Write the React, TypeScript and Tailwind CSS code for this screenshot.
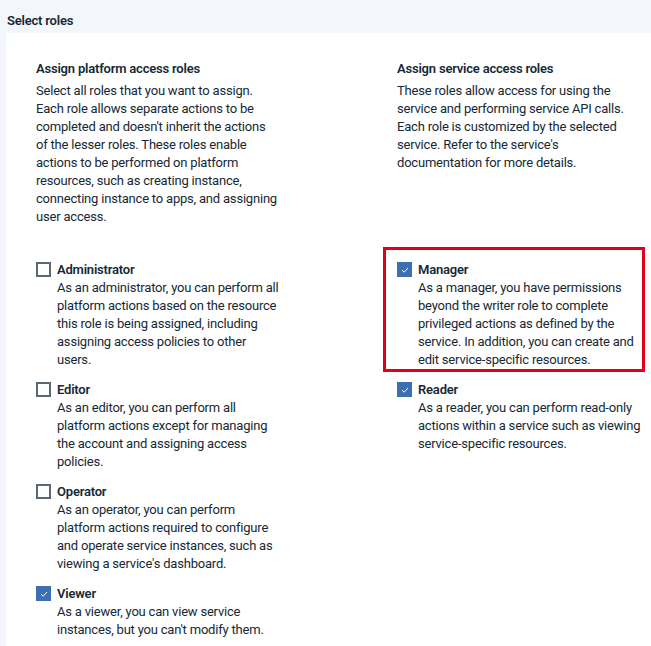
import React from 'react';

type Role = {
  name: string;
  checked: boolean;
  lines: string[];
  highlight?: boolean;
};

const platformRoles: Role[] = [
  {
    name: 'Administrator',
    checked: false,
    lines: [
      'As an administrator, you can perform all',
      'platform actions based on the resource',
      'this role is being assigned, including',
      'assigning access policies to other',
      'users.',
    ],
  },
  {
    name: 'Editor',
    checked: false,
    lines: [
      'As an editor, you can perform all',
      'platform actions except for managing',
      'the account and assigning access',
      'policies.',
    ],
  },
  {
    name: 'Operator',
    checked: false,
    lines: [
      'As an operator, you can perform',
      'platform actions required to configure',
      'and operate service instances, such as',
      "viewing a service's dashboard.",
    ],
  },
  {
    name: 'Viewer',
    checked: true,
    lines: ['As a viewer, you can view service', "instances, but you can't modify them."],
  },
];

const serviceRoles: Role[] = [
  {
    name: 'Manager',
    checked: true,
    highlight: true,
    lines: [
      'As a manager, you have permissions',
      'beyond the writer role to complete',
      'privileged actions as defined by the',
      'service. In addition, you can create and',
      'edit service-specific resources.',
    ],
  },
  {
    name: 'Reader',
    checked: true,
    lines: [
      'As a reader, you can perform read-only',
      'actions within a service such as viewing',
      'service-specific resources.',
    ],
  },
];

const Lines = ({ lines }: { lines: string[] }) => (
  <div>
    {lines.map((l, i) => (
      <div key={i} className="whitespace-nowrap">
        {l}
      </div>
    ))}
  </div>
);

const Checkbox = ({ checked }: { checked: boolean }) =>
  checked ? (
    <span className="mt-[1px] flex h-[15px] w-[15px] shrink-0 items-center justify-center bg-[#3d70b2]">
      <svg width="10" height="8" viewBox="0 0 10 8" fill="none">
        <path d="M2 4.2 L4.2 6.2 L8 2" stroke="white" strokeWidth="1" />
      </svg>
    </span>
  ) : (
    <span className="mt-[1px] block h-[15px] w-[15px] shrink-0 border-2 border-[#5a6872] bg-white" />
  );

const RoleItem = ({ role }: { role: Role }) => (
  <div className="relative flex gap-[6px]">
    {role.highlight && (
      <div className="pointer-events-none absolute -top-[14px] -left-[14px] right-[6px] -bottom-[3px] border-[3px] border-[#e0001b]" />
    )}
    <Checkbox checked={role.checked} />
    <div>
      <div className="font-semibold">{role.name}</div>
      <Lines lines={role.lines} />
    </div>
  </div>
);

const Intro = ({ title, desc }: { title: string; desc: string[] }) => (
  <div>
    <h3 className="mb-[4px] font-semibold">{title}</h3>
    <Lines lines={desc} />
  </div>
);

const RoleList = ({ roles }: { roles: Role[] }) => (
  <div className="flex flex-col gap-[12px]">
    {roles.map((r) => (
      <RoleItem key={r.name} role={r} />
    ))}
  </div>
);

const App = () => {
  return (
    <div className="min-h-[646px] bg-[#f3f6fa] font-['Roboto',sans-serif] text-[13px] leading-[18px] tracking-[-0.2px] text-[#152935]">
      <div className="h-[33px] pl-[7px] pt-[12px] font-semibold">Select roles</div>
      <div className="ml-[6px] grid min-h-[613px] grid-cols-[361px_1fr] content-start gap-y-[35px] bg-white pl-[30px] pt-[27px]">
        <Intro
          title="Assign platform access roles"
          desc={[
            'Select all roles that you want to assign.',
            'Each role allows separate actions to be',
            "completed and doesn't inherit the actions",
            'of the lesser roles. These roles enable',
            'actions to be performed on platform',
            'resources, such as creating instance,',
            'connecting instance to apps, and assigning',
            'user access.',
          ]}
        />
        <Intro
          title="Assign service access roles"
          desc={[
            'These roles allow access for using the',
            'service and performing service API calls.',
            'Each role is customized by the selected',
            "service. Refer to the service's",
            'documentation for more details.',
          ]}
        />
        <RoleList roles={platformRoles} />
        <RoleList roles={serviceRoles} />
      </div>
    </div>
  );
};

export default App;
